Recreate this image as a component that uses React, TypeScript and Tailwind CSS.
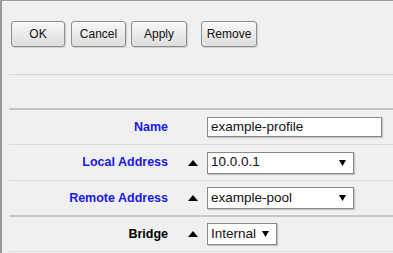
import React from "react";

const Up = () => (
  <svg width="10" height="6" viewBox="0 0 10 6" className="block">
    <polygon points="0,6 10,6 5,0" fill="#000" />
  </svg>
);

const Down = () => (
  <svg width="7" height="6" viewBox="0 0 7 6" className="block">
    <polygon points="0,0 7,0 3.5,6" fill="#000" />
  </svg>
);

const Btn = ({ label, w }: { label: string; w: string }) => (
  <button
    className={`${w} h-[26px] rounded-[3px] border border-[#8f8f8f] bg-gradient-to-b from-[#f8f8f8] to-[#dddddd] shadow-[1px_1px_1px_rgba(0,0,0,0.15)] text-[12px] text-[#111]`}
  >
    {label}
  </button>
);

const Row = ({
  label,
  blue,
  arrow,
  h,
  children,
}: {
  label: string;
  blue?: boolean;
  arrow?: boolean;
  h: string;
  children: React.ReactNode;
}) => (
  <div className={`flex items-center ${h}`}>
    <div
      className={`w-[166px] text-right font-bold text-[12.5px] ${
        blue ? "text-[#1818ee]" : "text-black"
      }`}
    >
      {label}
    </div>
    <div className="w-[39px] pl-[20px]">{arrow && <Up />}</div>
    {children}
  </div>
);

const Select = ({ value, w }: { value: string; w: string }) => (
  <div
    className={`${w} h-[22px] flex items-center justify-between bg-white border border-[#8a8a8a] shadow-[1px_1px_1px_rgba(0,0,0,0.18)] pl-[3px] pr-[7px] text-[13.5px] text-[#111]`}
  >
    <span>{value}</span>
    <Down />
  </div>
);

export default function App() {
  return (
    <div className="w-[393px] h-[253px] overflow-hidden bg-[#f0f0f0] border-t border-l-2 border-[#9a9a9a] font-['Liberation_Sans',Arial,sans-serif]">
      <div className="h-[73px] pt-[20px] pl-[9px] flex items-start">
        <div className="flex gap-[5px]">
          <div className="mr-px">
            <Btn label="OK" w="w-[54px]" />
          </div>
          <Btn label="Cancel" w="w-[55px]" />
          <Btn label="Apply" w="w-[56px]" />
        </div>
        <div className="ml-[14px]">
          <Btn label="Remove" w="w-[56px]" />
        </div>
      </div>
      <div className="ml-[7px] border-t border-[#d6d6d6]" />
      <div className="h-[33px]" />
      <div className="ml-[7px] border-t-2 border-[#c6c6c6]" />

      <Row label="Name" blue h="h-[34px]">
        <div className="w-[175px] h-[20px] flex items-center bg-white border border-[#8a8a8a] shadow-[1px_1px_1px_rgba(0,0,0,0.18)] pl-[3px] text-[13.5px] text-[#111]">
          example-profile
        </div>
      </Row>
      <div className="ml-[7px] border-t border-[#dadada]" />

      <Row label="Local Address" blue arrow h="h-[35px]">
        <Select value="10.0.0.1" w="w-[147px]" />
      </Row>
      <div className="ml-[7px] border-t border-[#dadada]" />

      <Row label="Remote Address" blue arrow h="h-[34px]">
        <Select value="example-pool" w="w-[147px]" />
      </Row>
      <div className="ml-[7px] border-t-2 border-[#c6c6c6]" />

      <Row label="Bridge" arrow h="h-[34px]">
        <Select value="Internal" w="w-[70px]" />
      </Row>
      <div className="ml-[7px] border-t border-[#dadada]" />
    </div>
  );
}
